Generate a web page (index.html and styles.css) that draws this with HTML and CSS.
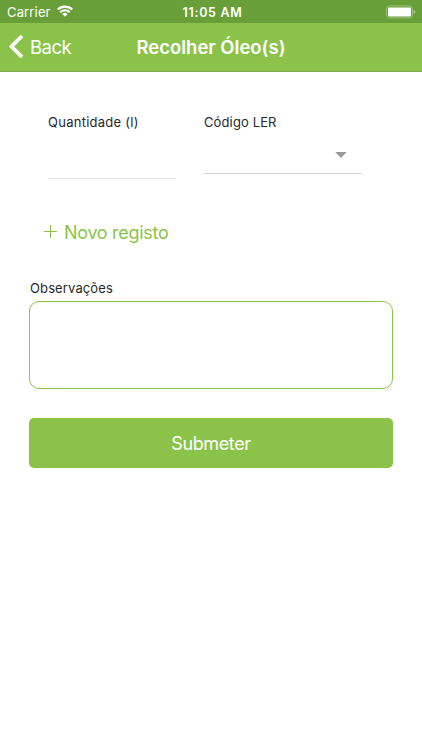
FILE: index.html
```html
<!DOCTYPE html>
<html lang="pt">
<head>
<meta charset="utf-8">
<title>Recolher Óleo(s)</title>
<link rel="stylesheet" href="styles.css">
</head>
<body>
<div class="status">
  <div class="status-left">
    <span class="carrier">Carrier</span>
    <svg class="wifi" width="16" height="12" viewBox="0 0 16 12" fill="none" stroke="#fff" stroke-width="2.2"><path d="M.8 4.500a10.300 10.300 0 0 1 14.400 0M3.300 7.200a6.700 6.700 0 0 1 9.400 0"/><path d="M8 11.700 5.300 9.100a3.800 3.800 0 0 1 5.400 0z" fill="#fff" stroke="none"/></svg>
  </div>
  <span class="time">11:05 AM</span>
  <svg class="battery" width="30" height="14" viewBox="0 0 30 14"><rect x=".6" y=".9" width="25.8" height="12" rx="3" fill="none" stroke="#9cc47c"/><rect x="2" y="2.4" width="23" height="9" rx="1.3" fill="#fff"/><path d="M27.7 4.8c2 .8 2 3.4 0 4.2z" fill="#b5d39a"/></svg>
</div>
<header class="navbar">
  <a class="back"><svg width="16" height="24" viewBox="0 0 16 24" fill="none" stroke="#fff" stroke-width="3.8"><path d="M14 1 3.500 11.500 14 22"/></svg><span>Back</span></a>
  <h1>Recolher Óleo(s)</h1>
</header>
<main>
  <div class="fields">
    <div class="field quantity"><label>Quantidade (l)</label><div class="input"></div></div>
    <div class="field code"><label>Código LER</label><div class="select"><svg width="12" height="6" viewBox="0 0 12 6"><path d="M.2 0h11.600L6 6z" fill="#999"/></svg></div></div>
  </div>
  <div class="add"><svg width="13" height="13" viewBox="0 0 13 13" stroke="#8bc34a"><path d="M6.500 0v13M0 6.500h13"/></svg><span>Novo registo</span></div>
  <label class="notes-label">Observações</label>
  <div class="notes"></div>
  <div class="submit"><span>Submeter</span></div>
</main>
</body>
</html>
```
FILE: styles.css
```css
* { box-sizing: border-box; }
body { margin: 0; width: 422px; height: 750px; overflow: hidden; background: #fff; color: #292929; font-family: Inter, "Liberation Sans", sans-serif; }
svg { display: block; flex: none; }
.status { height: 23px; background: #689f38; color: #fff; display: grid; grid-template-columns: 1fr auto 1fr; grid-template-rows: 23px; align-items: center; padding: 0 6px 0 7px; font-size: 13px; line-height: 23px; }
.status-left { display: flex; align-items: center; gap: 7px; }
.carrier { letter-spacing: .15px; padding-top: 1px; }
.wifi { margin: -2px 0 0 -1px; }
.time { font-weight: 600; font-size: 12.5px; letter-spacing: .7px; margin-left: 2px; padding-top: 2px; }
.battery { justify-self: end; }
.navbar { height: 49px; background: #8bc34a; border-bottom: 1px solid #7da955; color: #fff; display: grid; grid-template-columns: 1fr auto 1fr; align-items: center; padding: 0 8px; }
.back { display: flex; align-items: center; gap: 6px; font-size: 18.5px; letter-spacing: -.5px; }
h1 { margin: 0; font-size: 18.5px; font-weight: 600; letter-spacing: 0; }
main { padding: 41px 29px 0; }
.fields { display: flex; gap: 29px; padding-left: 19px; height: 108px; }
label { display: block; font-size: 13px; line-height: 18px; letter-spacing: .12px; white-space: nowrap; }
.quantity { width: 127px; }
.quantity label { letter-spacing: .26px; }
.code { width: 158px; }
.input { height: 48px; border-bottom: 1px solid #dedede; }
.select { height: 43px; border-bottom: 1px solid #d6d6d6; display: flex; justify-content: flex-end; padding: 21px 15px 0 0; }
.add { height: 22px; margin-left: 15px; display: flex; align-items: center; gap: 7px; color: #8bc34a; font-size: 18px; letter-spacing: -.3px; white-space: nowrap; }
.add svg { margin-top: -1px; }
.notes-label { margin-top: 36px; margin-left: 1px; }
.notes { height: 88px; margin-top: 4px; border: 1.5px solid #8bc34a; border-radius: 10px; }
.submit { height: 50px; margin-top: 29px; background: #8bc34a; border-radius: 5px; color: #fff; display: flex; align-items: center; justify-content: center; font-size: 18px; letter-spacing: -.4px; }
```
